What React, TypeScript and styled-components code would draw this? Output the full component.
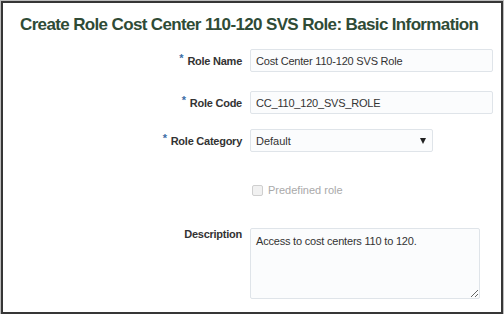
import React from "react";
import styled, { createGlobalStyle } from "styled-components";

const Global = createGlobalStyle`
  html, body { margin: 0; padding: 0; background: #ffffff; }
  body { font-family: "Liberation Sans", Arial, sans-serif; }
  * { box-sizing: border-box; }
`;

const Frame = styled.div`
  margin: 1px 0 0 1px;
  width: 502px;
  height: 313px;
  border: 2px solid #363636;
  box-shadow: 0 0 0 1px #bdbdbd;
  background: #fff;
  padding: 11px 0 0 17px;
`;

const Title = styled.h1`
  margin: 0;
  font-size: 17px;
  line-height: 22px;
  font-weight: bold;
  letter-spacing: -0.64px;
  color: #2f4b36;
  white-space: nowrap;
`;

const Form = styled.div`
  display: flex;
  flex-direction: column;
  margin-top: 13px;
`;

const Row = styled.div<{ $top: number; $align?: string }>`
  display: grid;
  grid-template-columns: 222px auto;
  column-gap: 8px;
  align-items: ${(p) => p.$align || "center"};
  margin-top: ${(p) => p.$top}px;
`;

const Label = styled.label`
  justify-self: end;
  font-size: 11px;
  font-weight: bold;
  letter-spacing: -0.25px;
  color: #333;
  white-space: nowrap;
`;

const Req = styled.span`
  color: #3c6ea6;
  font-size: 11px;
  position: relative;
  top: -3px;
  margin-right: 4px;
`;

const TextInput = styled.input<{ $w: number }>`
  width: ${(p) => p.$w}px;
  height: 23px;
  border: 1px solid #dfe4e9;
  border-radius: 2px;
  background: #fbfcfd;
  padding: 0 5px;
  font-family: "Liberation Sans", Arial, sans-serif;
  font-size: 11px;
  letter-spacing: -0.2px;
  color: #333;
  outline: none;
`;

const SelectBox = styled.div`
  width: 183px;
  height: 23px;
  border: 1px solid #dfe4e9;
  border-radius: 2px;
  background: #fbfcfd;
  display: flex;
  align-items: center;
  padding: 0 6px 0 5px;
  font-size: 11px;
  color: #333;
  justify-content: space-between;
`;

const Arrow = styled.span`
  width: 0;
  height: 0;
  border-left: 3px solid transparent;
  border-right: 3px solid transparent;
  border-top: 6px solid #222;
`;

const CheckWrap = styled.div`
  display: flex;
  align-items: center;
  gap: 5px;
  padding-left: 2px;
  font-size: 11px;
  color: #a9a9a9;
`;

const Box = styled.span`
  width: 11px;
  height: 11px;
  border: 1px solid #cfcfcf;
  border-radius: 2px;
  background: #f1f1f1;
`;

const Area = styled.textarea`
  width: 230px;
  height: 71px;
  border: 1px solid #dfe4e9;
  border-radius: 2px;
  background: #fbfcfd;
  padding: 6px 5px;
  font-family: "Liberation Sans", Arial, sans-serif;
  font-size: 11px;
  letter-spacing: -0.2px;
  color: #333;
  outline: none;
  resize: both;
`;

export default function App() {
  return (
    <>
      <Global />
      <Frame>
        <Title>Create Role Cost Center 110-120 SVS Role: Basic Information</Title>
        <Form>
          <Row $top={0}>
            <Label><Req>*</Req>Role Name</Label>
            <TextInput $w={243} defaultValue="Cost Center 110-120 SVS Role" readOnly />
          </Row>
          <Row $top={19}>
            <Label><Req>*</Req>Role Code</Label>
            <TextInput $w={243} defaultValue="CC_110_120_SVS_ROLE" readOnly />
          </Row>
          <Row $top={15}>
            <Label><Req>*</Req>Role Category</Label>
            <SelectBox>
              <span>Default</span>
              <Arrow />
            </SelectBox>
          </Row>
          <Row $top={32}>
            <span />
            <CheckWrap>
              <Box />
              <span>Predefined role</span>
            </CheckWrap>
          </Row>
          <Row $top={32} $align="start">
            <Label>Description</Label>
            <Area defaultValue="Access to cost centers 110 to 120." readOnly />
          </Row>
        </Form>
      </Frame>
    </>
  );
}
